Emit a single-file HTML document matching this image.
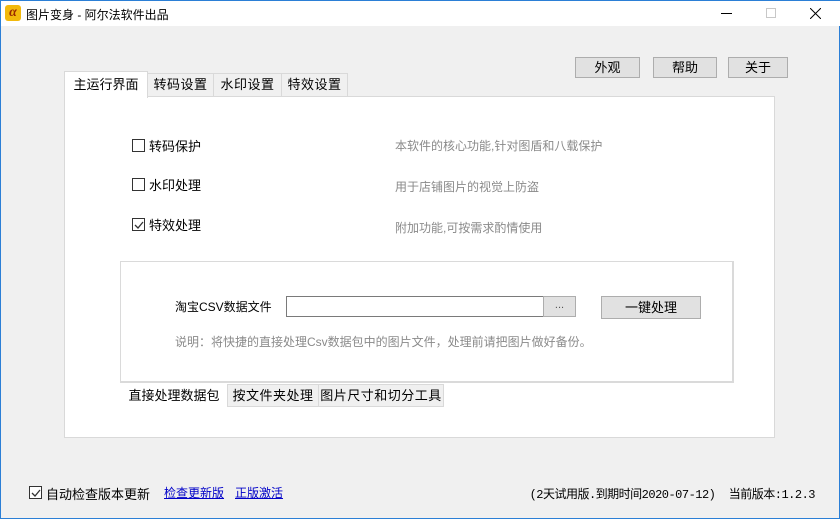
<!DOCTYPE html>
<html><head><meta charset="utf-8"><style>
*{margin:0;padding:0;box-sizing:border-box}
body{width:840px;height:519px;overflow:hidden;font-family:"Liberation Sans","Noto Sans CJK SC",sans-serif;font-size:12px;color:#000;background:#f0f0f0;position:relative}
.win{position:absolute;left:0;top:0;width:840px;height:519px;border:1px solid #2b7fd6;border-top:none;background:#f0f0f0}
.title{position:absolute;left:0;top:0;width:840px;height:26px;background:#fff;border-top:1px solid #2b7fd6}
.a{position:absolute}
.btn{position:absolute;background:#e1e1e1;border:1px solid #adadad;text-align:center;font-size:13px}
.tab{position:absolute;background:#f0f0f0;border:1px solid #d9d9d9;text-align:center;font-size:13px;letter-spacing:0.5px}
.cb{position:absolute;width:13px;height:13px;border:1px solid #333;background:#fff}
.gray{color:#8a8a8a}
a{color:#0000c8;text-decoration:underline}
</style></head><body><div class="win">
<div class="title">
<div class="a" style="left:4px;top:4px;width:16px;height:16px;background:#f2b90c;border-radius:3px;color:#9a2a00;font-weight:bold;font-style:italic;font-size:14px;line-height:15px;text-align:center;font-family:'Liberation Serif',serif">α</div>
<div class="a" style="left:25px;top:5px;font-size:12px">图片变身 - 阿尔法软件出品</div>
<div class="a" style="left:720px;top:12px;width:11px;height:1px;background:#000"></div>
<div class="a" style="left:765px;top:7px;width:10px;height:10px;border:1px solid #c8c8c8"></div>
<svg class="a" style="left:809px;top:7px" width="11" height="11"><path d="M0 0L11 11M11 0L0 11" stroke="#000" stroke-width="1"/></svg>
</div>
<div class="btn" style="left:574px;top:57px;width:65px;height:21px;line-height:19px">外观</div>
<div class="btn" style="left:652px;top:57px;width:64px;height:21px;line-height:19px">帮助</div>
<div class="btn" style="left:727px;top:57px;width:60px;height:21px;line-height:19px">关于</div>

<div class="a" style="left:63px;top:96px;width:711px;height:342px;background:#fff;border:1px solid #d9d9d9"></div>
<div class="tab" style="left:146px;top:73px;width:67px;height:24px;line-height:22px">转码设置</div>
<div class="tab" style="left:212px;top:73px;width:69px;height:24px;line-height:22px">水印设置</div>
<div class="tab" style="left:280px;top:73px;width:67px;height:24px;line-height:22px">特效设置</div>
<div class="a" style="left:63px;top:71px;width:84px;height:27px;background:#fff;border:1px solid #d9d9d9;border-bottom:none;text-align:center;line-height:25px;font-size:13px">主运行界面</div>

<div class="cb" style="left:131px;top:139px"></div><div class="a" style="left:148px;top:136px;font-size:13px">转码保护</div>
<div class="cb" style="left:131px;top:178px"></div><div class="a" style="left:148px;top:175px;font-size:13px">水印处理</div>
<div class="cb" style="left:131px;top:218px"></div><svg class="a" style="left:133px;top:220px" width="10" height="10"><path d="M1 5L4 8L9 2" stroke="#333" fill="none" stroke-width="1.3"/></svg><div class="a" style="left:148px;top:215px;font-size:13px">特效处理</div>
<div class="a gray" style="left:394px;top:137px">本软件的核心功能,针对图盾和八载保护</div>
<div class="a gray" style="left:394px;top:178px">用于店铺图片的视觉上防盗</div>
<div class="a gray" style="left:394px;top:219px">附加功能,可按需求酌情使用</div>

<div class="a" style="left:119px;top:261px;width:614px;height:122px;border:1px solid #dadada;border-right:2px solid #dadada;border-bottom:2px solid #dadada;background:#fff"></div>
<div class="a" style="left:174px;top:298px">淘宝CSV数据文件</div>
<div class="a" style="left:285px;top:296px;width:258px;height:21px;border:1px solid #7a7a7a;background:#fff"></div>
<div class="btn" style="left:542px;top:296px;width:33px;height:21px;line-height:17px;font-size:11px;color:#555">...</div>
<div class="btn" style="left:600px;top:296px;width:100px;height:23px;line-height:21px">一键处理</div>
<div class="a gray" style="left:174px;top:333px">说明：将快捷的直接处理Csv数据包中的图片文件，处理前请把图片做好备份。</div>
<div class="a" style="left:120px;top:383px;width:106px;height:26px;background:#fff;text-align:center;line-height:26px;font-size:13px">直接处理数据包</div>
<div class="tab" style="left:226px;top:384px;width:92px;height:23px;line-height:21px">按文件夹处理</div>
<div class="tab" style="left:317px;top:384px;width:126px;height:23px;line-height:21px">图片尺寸和切分工具</div>

<div class="cb" style="left:28px;top:486px"></div><svg class="a" style="left:30px;top:488px" width="10" height="10"><path d="M1 5L4 8L9 2" stroke="#333" fill="none" stroke-width="1.3"/></svg>
<div class="a" style="left:45px;top:484px;font-size:13px">自动检查版本更新</div>
<div class="a" style="left:163px;top:484px"><a>检查更新版</a></div>
<div class="a" style="left:234px;top:484px"><a>正版激活</a></div>
<div class="a" style="right:24px;top:485px;font-family:'Liberation Mono','Noto Sans CJK SC',monospace;font-size:12px;letter-spacing:-0.5px">(2天试用版.到期时间2020-07-12)&nbsp;&nbsp;当前版本:1.2.3</div>
</div></body></html>
